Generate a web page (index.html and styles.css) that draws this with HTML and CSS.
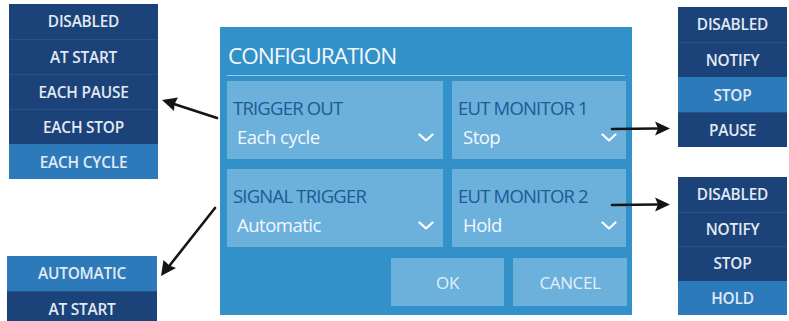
FILE: index.html
```html
<!DOCTYPE html>
<html>
<head>
<meta charset="utf-8">
<link rel="stylesheet" href="styles.css">
</head>
<body>
<div class="canvas">
  <div class="col-left">
    <ul class="menu menu-trigger">
      <li>DISABLED</li>
      <li>AT START</li>
      <li>EACH PAUSE</li>
      <li>EACH STOP</li>
      <li class="sel">EACH CYCLE</li>
    </ul>
    <ul class="menu menu-signal">
      <li class="sel">AUTOMATIC</li>
      <li>AT START</li>
    </ul>
  </div>

  <div class="dialog">
    <h1 class="title">CONFIGURATION</h1>
    <div class="fields">
      <div class="field">
        <div class="label">TRIGGER OUT</div>
        <div class="value"><span>Each cycle</span><svg class="chev" viewBox="0 0 16 9"><path d="M1.5 1.5 L8 7.5 L14.5 1.5"/></svg></div>
      </div>
      <div class="field">
        <div class="label">EUT MONITOR 1</div>
        <div class="value"><span>Stop</span><svg class="chev" viewBox="0 0 16 9"><path d="M1.5 1.5 L8 7.5 L14.5 1.5"/></svg></div>
      </div>
      <div class="field">
        <div class="label">SIGNAL TRIGGER</div>
        <div class="value"><span>Automatic</span><svg class="chev" viewBox="0 0 16 9"><path d="M1.5 1.5 L8 7.5 L14.5 1.5"/></svg></div>
      </div>
      <div class="field">
        <div class="label">EUT MONITOR 2</div>
        <div class="value"><span>Hold</span><svg class="chev" viewBox="0 0 16 9"><path d="M1.5 1.5 L8 7.5 L14.5 1.5"/></svg></div>
      </div>
    </div>
    <div class="buttons">
      <button class="btn">OK</button>
      <button class="btn">CANCEL</button>
    </div>
  </div>

  <div class="col-right">
    <ul class="menu menu-mon1">
      <li>DISABLED</li>
      <li>NOTIFY</li>
      <li class="sel">STOP</li>
      <li>PAUSE</li>
    </ul>
    <ul class="menu menu-mon2">
      <li>DISABLED</li>
      <li>NOTIFY</li>
      <li>STOP</li>
      <li class="sel">HOLD</li>
    </ul>
  </div>

  <svg class="arrows" viewBox="0 0 789 321" width="789" height="321">
    <g stroke="#151515" stroke-width="2.6" fill="none" stroke-linecap="round">
      <line x1="217" y1="118" x2="174" y2="104"/>
      <line x1="215" y1="208" x2="170" y2="265"/>
      <line x1="612" y1="129" x2="657" y2="128.5"/>
      <line x1="612" y1="205" x2="657" y2="204.5"/>
    </g>
    <g fill="#151515">
      <path d="M162 100 L178 97.5 L174.5 104 L174 111 Z"/>
      <path d="M161 276 L163.5 260 L169.5 265.5 L176 268 Z"/>
      <path d="M670 128.5 L655 121.5 L658 128.5 L655 135.5 Z"/>
      <path d="M670 204.5 L655 197.5 L658 204.5 L655 211.5 Z"/>
    </g>
  </svg>
</div>
</body>
</html>
```

FILE: styles.css
```css
* { box-sizing: border-box; }
html, body {
  margin: 0;
  padding: 0;
  background: #ffffff;
  overflow: hidden;
}
body {
  font-family: "Open Sans", "Noto Sans", sans-serif;
}
.canvas {
  position: relative;
  width: 789px;
  height: 321px;
  display: grid;
  grid-template-columns: 220px 412px 1fr;
  overflow: hidden;
}

/* menus */
.menu {
  list-style: none;
  margin: 0;
  padding: 0;
  background: #1c4379;
}
.menu li {
  height: 35px;
  display: flex;
  align-items: center;
  justify-content: center;
  color: #e2eaf3;
  font-size: 15.4px;
  font-weight: 600;
  letter-spacing: -0.2px;
  border-top: 1px solid #28518a;
}
.menu li:first-child { border-top: none; }
.menu li.sel {
  background: #2d7aba;
  border-top-color: #2d7aba;
}

.col-left {
  display: flex;
  flex-direction: column;
}
.menu-trigger {
  margin: 4px 0 0 9px;
  width: 149px;
}
.menu-signal {
  margin: 77px 0 0 7px;
  width: 150px;
}

.col-right {
  display: flex;
  flex-direction: column;
  padding-left: 46px;
}
.menu-mon1 { margin-top: 7px; width: 109px; }
.menu-mon2 { margin-top: 30px; width: 109px; }
.menu-mon2 li { height: 34.5px; }

/* dialog */
.dialog {
  position: relative;
  margin-top: 27px;
  height: 288px;
  background: #3391c9;
  padding: 0 6px 0 7px;
  display: flex;
  flex-direction: column;
}
.title {
  margin: 0 1px 0 0;
  padding: 14px 0 0 1px;
  height: 49px;
  border-bottom: 1px solid #9cc9e9;
  font-weight: 400;
  font-size: 22.6px;
  line-height: 30px;
  color: #f3f8fc;
  letter-spacing: -1px;
}
.fields {
  margin-top: 5px;
  display: grid;
  grid-template-columns: 216px 174px;
  grid-template-rows: 78px 78px;
  column-gap: 9px;
  row-gap: 10px;
}
.field {
  background: #6cb1dc;
  padding: 15px 9px 0 6px;
  display: flex;
  flex-direction: column;
}
.label {
  color: #1e5a95;
  font-size: 18.5px;
  line-height: 24px;
  letter-spacing: -0.8px;
}
.value {
  margin-top: 5px;
  padding-left: 4px;
  display: flex;
  align-items: center;
  justify-content: space-between;
  color: #f2f8fc;
  font-size: 18.5px;
  line-height: 24px;
  letter-spacing: -0.5px;
}
.field:nth-child(2n) .value { padding-left: 5px; }
.chev {
  width: 16px;
  height: 9px;
  margin-top: 1px;
}
.chev path {
  fill: none;
  stroke: #ffffff;
  stroke-width: 2.2;
  stroke-linecap: round;
  stroke-linejoin: round;
}
.buttons {
  margin-top: 11px;
  margin-right: -1px;
  display: flex;
  justify-content: flex-end;
  gap: 9px;
}
.btn {
  height: 48px;
  border: none;
  margin: 0;
  background: #6cb1dc;
  color: #e3f0f9;
  font-family: "Open Sans", "Noto Sans", sans-serif;
  font-size: 17px;
  letter-spacing: -0.4px;
  padding: 0;
}
.btn:first-child { width: 113px; }
.btn:last-child { width: 114px; }

.arrows {
  position: absolute;
  left: 0;
  top: 0;
  pointer-events: none;
}
```
